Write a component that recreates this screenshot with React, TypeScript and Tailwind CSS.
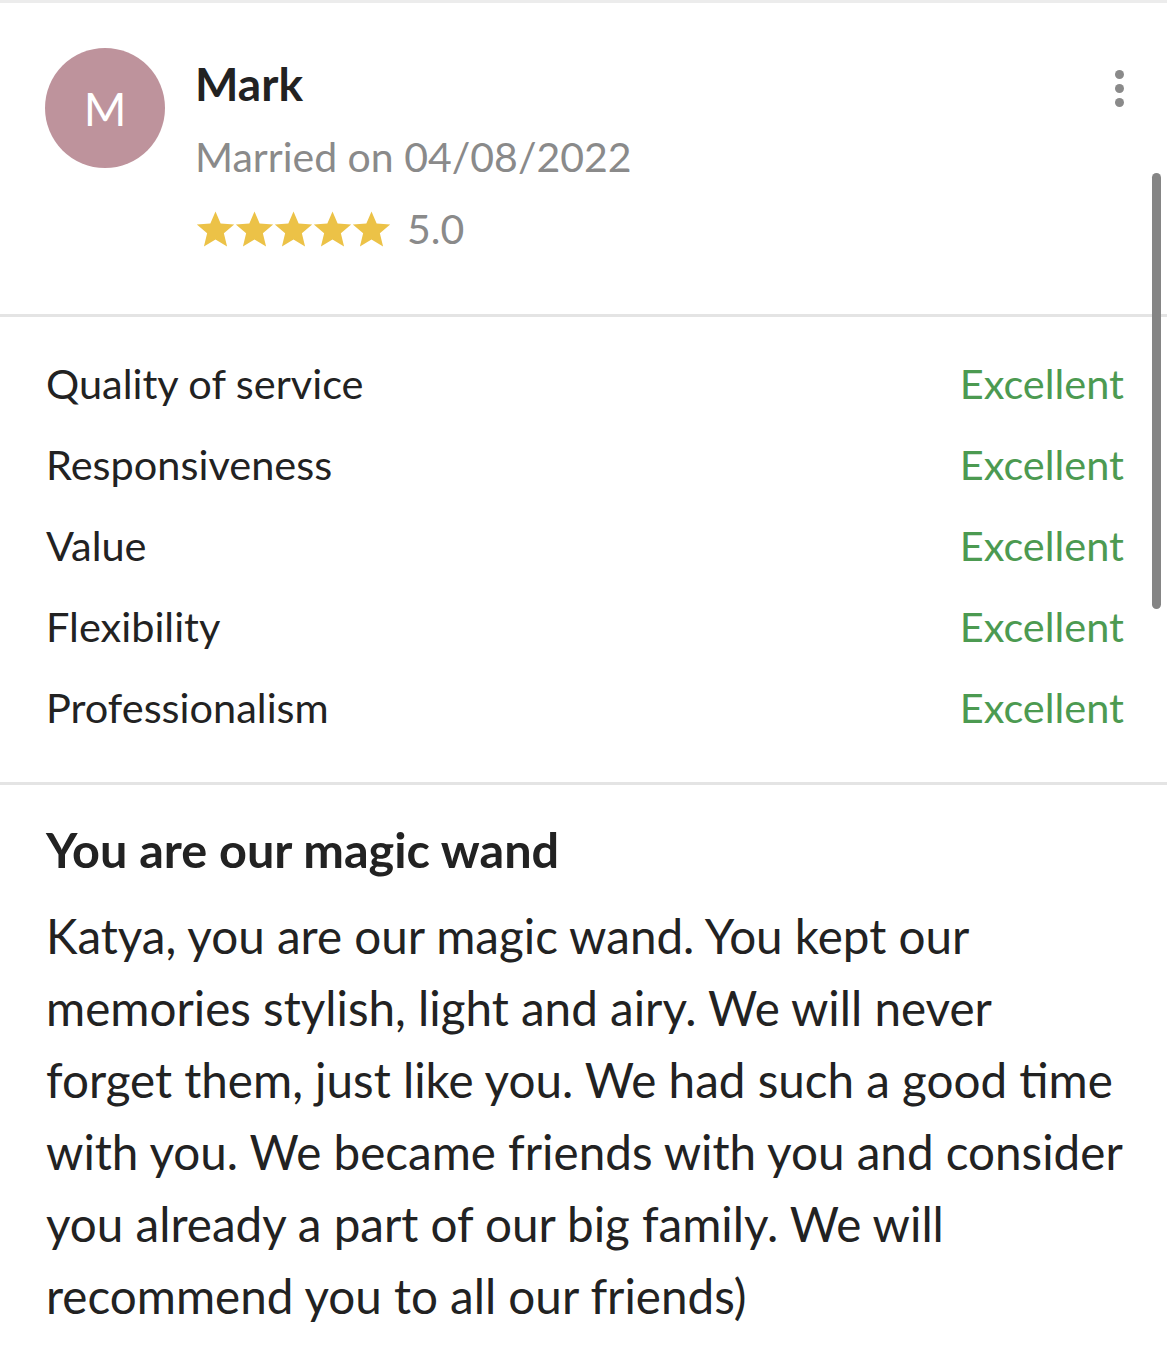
const ratings = [
  { label: "Quality of service", value: "Excellent" },
  { label: "Responsiveness", value: "Excellent" },
  { label: "Value", value: "Excellent" },
  { label: "Flexibility", value: "Excellent" },
  { label: "Professionalism", value: "Excellent" },
];

function Star() {
  return (
    <svg viewBox="0 0 24 23" className="w-[39px] h-[37px]">
      <path
        fill="#ecc247"
        d="M12 0.3l3.2 7.5 8.4.6-6.4 5.5 2 8.2L12 17.7l-7.2 4.4 2-8.2L0.4 8.4l8.4-.6z"
      />
    </svg>
  );
}

export default function App() {
  return (
    <div className="relative w-[1167px] min-h-[1355px] bg-white font-['Lato',sans-serif] text-[#222] border-t-[3px] border-[#ececec]">
      {/* scrollbar */}
      <div className="absolute right-[6px] top-[170px] w-[9px] h-[436px] rounded-full bg-[#858585]" />

      {/* Header */}
      <div className="flex items-start pl-[45px] pr-[44px] pt-[46px] pb-[48px] border-b-[3px] border-[#e4e4e4]">
        <div className="w-[120px] h-[120px] rounded-full bg-[#be939c] flex items-center justify-center text-white text-[46px] shrink-0 -mt-[1px]">
          M
        </div>
        <div className="ml-[31px] flex-1">
          <div className="text-[46px] font-bold leading-[76px] -mt-[3px] -ml-[1px]">Mark</div>
          <div className="text-[41px] text-[#8a8a8a] leading-[70px] -ml-[1px]">Married on 04/08/2022</div>
          <div className="flex items-center h-[74px]">
            <Star />
            <Star />
            <Star />
            <Star />
            <Star />
            <span className="ml-[16px] text-[41px] text-[#8a8a8a]">5.0</span>
          </div>
        </div>
        <div className="mt-[21px] flex flex-col items-center gap-[5px] w-[8px]">
          <span className="w-[9px] h-[9px] rounded-full bg-[#8a8a8a]" />
          <span className="w-[9px] h-[9px] rounded-full bg-[#8a8a8a]" />
          <span className="w-[9px] h-[9px] rounded-full bg-[#8a8a8a]" />
        </div>
      </div>

      {/* Ratings */}
      <div className="pl-[46px] pr-[43px] pt-[26px] pb-[34px] border-b-[3px] border-[#e4e4e4]">
        {ratings.map((r) => (
          <div key={r.label} className="flex items-center justify-between h-[81px] text-[41.5px]">
            <span>{r.label}</span>
            <span className="text-[#4c9a51]">{r.value}</span>
          </div>
        ))}
      </div>

      {/* Review */}
      <div className="pl-[46px] pr-[44px] pt-[36px]">
        <h2 className="text-[48.6px] font-bold leading-[56px]">You are our magic wand</h2>
        <p className="mt-[23px] text-[47.6px] leading-[72px]">
          Katya, you are our magic wand. You kept our memories stylish, light and airy. We will never forget
          them, just like you. We had such a good time with you. We became friends with you and consider you
          already a part of our big family. We will recommend you to all our friends)
        </p>
      </div>
    </div>
  );
}
